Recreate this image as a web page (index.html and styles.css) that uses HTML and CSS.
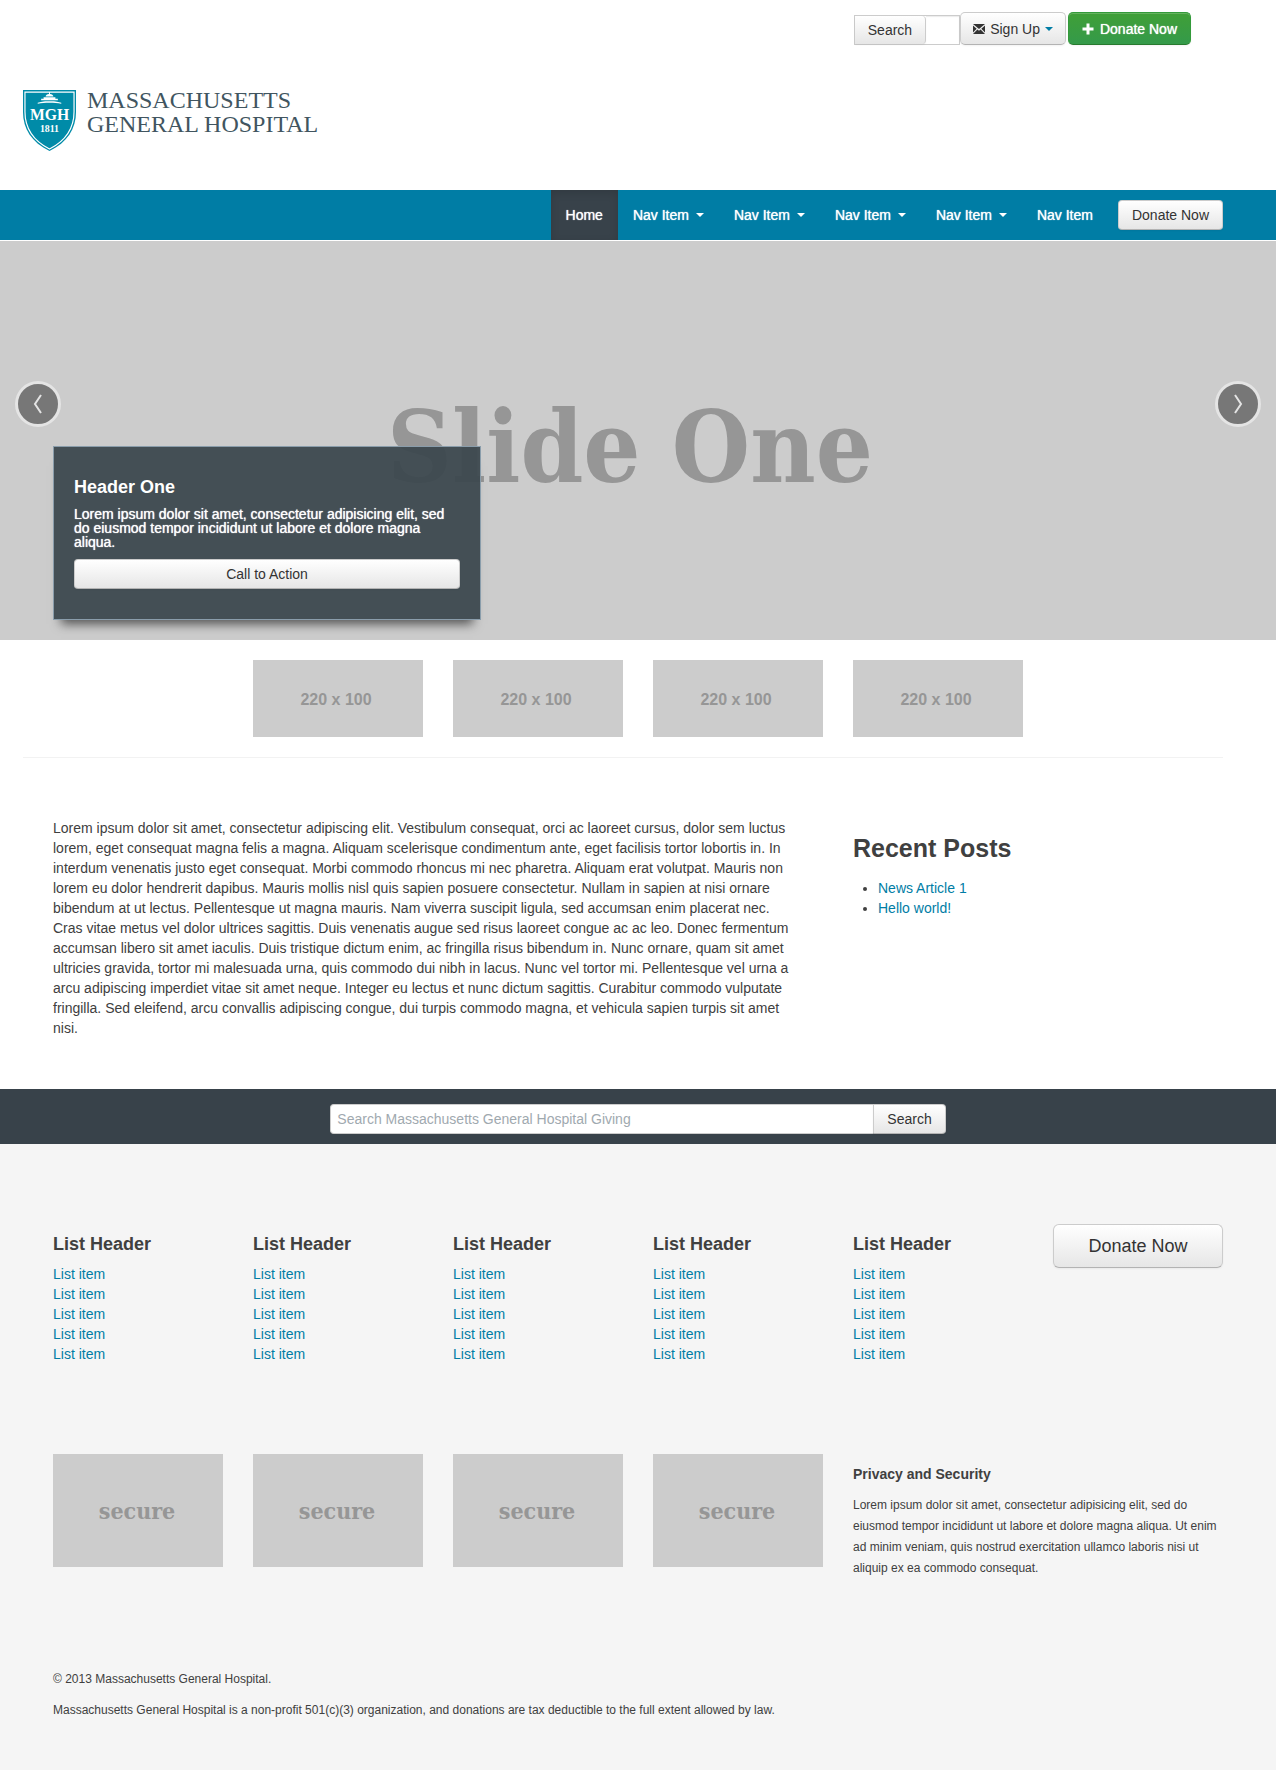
FILE: index.html
```html
<!DOCTYPE html>
<html lang="en">
<head>
<meta charset="utf-8">
<meta name="viewport" content="width=device-width, initial-scale=1">
<title>Massachusetts General Hospital Giving</title>
<link rel="stylesheet" href="styles.css">
</head>
<body>
<header class="container">
  <div class="tools">
    <form class="quick-search">
      <button class="btn" type="button">Search</button>
      <input type="text" aria-label="Search">
    </form>
    <button class="btn btn-tool" type="button">
      <svg width="12" height="10" viewBox="0 0 12 10" aria-hidden="true"><path fill="#333" d="M0 0h12L6 5zM0 1.500 3.700 4.800 0 8.500zM12 1.500 8.300 4.800 12 8.500zM0 10 4.400 5.400 6 6.800 7.600 5.400 12 10z"/></svg>
      Sign Up
      <span class="caret caret-blue"></span>
    </button>
    <button class="btn btn-tool btn-green" type="button">
      <svg width="12" height="12" viewBox="0 0 12 12" aria-hidden="true"><path fill="#fff" d="M4.500 0.500h3v4H11.500v3H7.500v4h-3v-4H0.500v-3h4z"/></svg>
      Donate Now
    </button>
  </div>
  <a class="logo" href="#">
    <svg width="53" height="61" viewBox="0 0 54 62" aria-hidden="true">
      <path fill="#008ba8" d="M0 0h54v22c0 18-9 31-27 40C9 53 0 40 0 22z"/>
      <path fill="none" stroke="#fff" stroke-width="1.200" d="M2 2h50v20c0 17-8.500 29.500-25 38C10.500 51.500 2 39 2 22z"/>
      <path fill="#fff" d="M26.500 2h1v2c2 .2 3.200 1 3.500 2.500h-8c.3-1.500 1.500-2.300 3.500-2.500zM21 7.300h12v1.500h2.500v1.500h-17V8.800H21zM15 13c3-1 5-1.700 12-1.700S36 12 39 13v1c-4-.7-7-1-12-1s-8 .3-12 1z"/>
      <text x="27" y="31" class="shield-name">MGH</text>
      <text x="27" y="43" class="shield-year">1811</text>
    </svg>
    <span>MASSACHUSETTS<br>GENERAL HOSPITAL</span>
  </a>
</header>

<nav class="navbar">
  <div class="container nav-row">
    <a class="active" href="#">Home</a>
    <a href="#">Nav Item <span class="caret"></span></a>
    <a href="#">Nav Item <span class="caret"></span></a>
    <a href="#">Nav Item <span class="caret"></span></a>
    <a href="#">Nav Item <span class="caret"></span></a>
    <a href="#">Nav Item</a>
    <button class="btn" type="button">Donate Now</button>
  </div>
</nav>

<section class="slider">
  <div class="slide-title">Slide One</div>
  <button class="arrow prev" type="button" aria-label="Previous"><svg width="10" height="20" viewBox="0 0 10 20" aria-hidden="true"><path d="M8 1 2 10l6 9"/></svg></button>
  <button class="arrow next" type="button" aria-label="Next"><svg width="10" height="20" viewBox="0 0 10 20" aria-hidden="true"><path d="M2 1l6 9-6 9"/></svg></button>
  <div class="caption">
    <h4>Header One</h4>
    <p>Lorem ipsum dolor sit amet, consectetur adipisicing elit, sed do eiusmod tempor incididunt ut labore et dolore magna aliqua.</p>
    <button class="btn btn-block" type="button">Call to Action</button>
  </div>
</section>

<main class="container">
  <div class="grid thumbs">
    <div class="thumb">220 x 100</div>
    <div class="thumb">220 x 100</div>
    <div class="thumb">220 x 100</div>
    <div class="thumb">220 x 100</div>
  </div>
  <hr class="rule">
  <div class="grid content">
    <p class="article">Lorem ipsum dolor sit amet, consectetur adipiscing elit. Vestibulum consequat, orci ac laoreet cursus, dolor sem luctus lorem, eget consequat magna felis a magna. Aliquam scelerisque condimentum ante, eget facilisis tortor lobortis in. In interdum venenatis justo eget consequat. Morbi commodo rhoncus mi nec pharetra. Aliquam erat volutpat. Mauris non lorem eu dolor hendrerit dapibus. Mauris mollis nisl quis sapien posuere consectetur. Nullam in sapien at nisi ornare bibendum at ut lectus. Pellentesque ut magna mauris. Nam viverra suscipit ligula, sed accumsan enim placerat nec. Cras vitae metus vel dolor ultrices sagittis. Duis venenatis augue sed risus laoreet congue ac ac leo. Donec fermentum accumsan libero sit amet iaculis. Duis tristique dictum enim, ac fringilla risus bibendum in. Nunc ornare, quam sit amet ultricies gravida, tortor mi malesuada urna, quis commodo dui nibh in lacus. Nunc vel tortor mi. Pellentesque vel urna a arcu adipiscing imperdiet vitae sit amet neque. Integer eu lectus et nunc dictum sagittis. Curabitur commodo vulputate fringilla. Sed eleifend, arcu convallis adipiscing congue, dui turpis commodo magna, et vehicula sapien turpis sit amet nisi.</p>
    <aside class="recent">
      <h3>Recent Posts</h3>
      <ul>
        <li><a href="#">News Article 1</a></li>
        <li><a href="#">Hello world!</a></li>
      </ul>
    </aside>
  </div>
</main>

<form class="search-bar">
  <input type="text" placeholder="Search Massachusetts General Hospital Giving" aria-label="Search Massachusetts General Hospital Giving">
  <button class="btn" type="button">Search</button>
</form>

<footer class="footer">
  <div class="container">
    <div class="grid lists">
      <div><h4>List Header</h4><ul><li><a href="#">List item</a></li><li><a href="#">List item</a></li><li><a href="#">List item</a></li><li><a href="#">List item</a></li><li><a href="#">List item</a></li></ul></div>
      <div><h4>List Header</h4><ul><li><a href="#">List item</a></li><li><a href="#">List item</a></li><li><a href="#">List item</a></li><li><a href="#">List item</a></li><li><a href="#">List item</a></li></ul></div>
      <div><h4>List Header</h4><ul><li><a href="#">List item</a></li><li><a href="#">List item</a></li><li><a href="#">List item</a></li><li><a href="#">List item</a></li><li><a href="#">List item</a></li></ul></div>
      <div><h4>List Header</h4><ul><li><a href="#">List item</a></li><li><a href="#">List item</a></li><li><a href="#">List item</a></li><li><a href="#">List item</a></li><li><a href="#">List item</a></li></ul></div>
      <div><h4>List Header</h4><ul><li><a href="#">List item</a></li><li><a href="#">List item</a></li><li><a href="#">List item</a></li><li><a href="#">List item</a></li><li><a href="#">List item</a></li></ul></div>
      <button class="btn btn-large" type="button">Donate Now</button>
    </div>
    <div class="grid secure-row">
      <div class="secure">secure</div>
      <div class="secure">secure</div>
      <div class="secure">secure</div>
      <div class="secure">secure</div>
      <div class="privacy">
        <h5>Privacy and Security</h5>
        <p>Lorem ipsum dolor sit amet, consectetur adipisicing elit, sed do eiusmod tempor incididunt ut labore et dolore magna aliqua. Ut enim ad minim veniam, quis nostrud exercitation ullamco laboris nisi ut aliquip ex ea commodo consequat.</p>
      </div>
    </div>
    <div class="legal">
      <p>© 2013 Massachusetts General Hospital.</p>
      <p>Massachusetts General Hospital is a non-profit 501(c)(3) organization, and donations are tax deductible to the full extent allowed by law.</p>
    </div>
  </div>
</footer>
</body>
</html>
```
FILE: styles.css
```css
* { box-sizing: border-box; }
body {
  margin: 0;
  background: #fff;
  color: #404040;
  font: 14px/20px "Liberation Sans", Arial, sans-serif;
}
h3, h4, h5, p, ul { margin: 0; }
a { color: #007da5; text-decoration: none; }
button, input { font: inherit; color: inherit; margin: 0; }
svg { display: block; flex: none; }

.container { max-width: 1170px; margin: 0 auto; }
.grid { display: grid; grid-template-columns: repeat(6, 1fr); column-gap: 30px; }

.btn {
  height: 30px;
  padding: 0 13px;
  border: 1px solid #ccc;
  border-bottom-color: #b3b3b3;
  border-radius: 4px;
  background: linear-gradient(#fff, #e6e6e6);
  box-shadow: inset 0 1px 0 rgba(255, 255, 255, .2), 0 1px 2px rgba(0, 0, 0, .05);
  color: #333;
  white-space: nowrap;
}

/* Header */
.tools {
  display: flex;
  justify-content: flex-end;
  align-items: flex-end;
  padding: 12px 32px 0 0;
}
.quick-search { display: flex; border: 1px solid #ccc; }
.quick-search .btn { height: 28px; border-width: 0 1px 0 0; border-radius: 0 4px 4px 0; }
.quick-search input {
  width: 33px;
  height: 28px;
  border: 0;
  box-shadow: inset 0 1px 1px rgba(0, 0, 0, .08);
}
.btn-tool {
  display: flex;
  align-items: center;
  gap: 5px;
  height: 33px;
  padding: 0 12px;
  border-radius: 5px;
}
.btn-green {
  margin-left: 2px;
  padding: 0 13px;
  gap: 6px;
  border-color: #339a3a #339a3a #287a2e;
  background: linear-gradient(#409f37, #349a4a);
  color: #fff;
  text-shadow: 0 0 1px #fff;
}
.caret {
  border: 4px solid transparent;
  border-top-color: #fff;
  border-bottom: 0;
}
.caret-blue { border-top-color: #007da5; }
.logo {
  display: inline-flex;
  gap: 11px;
  margin: 43px 0 39px -30px;
  color: #415560;
  font: 24px/24px "Liberation Serif", serif;
}
.logo svg { margin-top: 2px; }
.shield-name, .shield-year { fill: #fff; text-anchor: middle; font-family: "Liberation Serif", serif; font-weight: bold; }
.shield-name { font-size: 16px; }
.shield-year { font-size: 10px; }

/* Navigation */
.navbar { background: #007da5; border-bottom: 1px solid #fff; }
.nav-row { display: flex; justify-content: flex-end; align-items: center; }
.nav-row a {
  display: flex;
  align-items: center;
  gap: 7px;
  padding: 15px;
  color: #fff;
  text-shadow: 0 0 1px #fff;
}
.nav-row .active { background: #38424a; box-shadow: inset 0 3px 8px rgba(0, 0, 0, .125); }
.nav-row .btn { margin-left: 10px; }

/* Slider */
.slider {
  position: relative;
  display: grid;
  place-items: center;
  min-height: 399px;
  background: #ccc;
}
.slide-title {
  padding: 12px 16px 0 0;
  color: #969696;
  font: bold 100px/120px "DejaVu Serif Condensed", "DejaVu Serif", serif;
}
.arrow {
  position: absolute;
  top: 140px;
  display: grid;
  place-items: center;
  width: 46px;
  height: 46px;
  padding: 0;
  border: 3px solid #e4e4e4;
  border-radius: 50%;
  background: #777;
}
.prev { left: 15px; }
.next { right: 15px; }
.arrow path { fill: none; stroke: #e4e4e4; stroke-width: 2; }
.caption {
  position: absolute;
  left: 53px;
  bottom: 20px;
  width: 428px;
  padding: 30px 20px;
  border: 1px solid #8a9dab;
  background: rgba(60, 71, 78, .94);
  box-shadow: 0 12px 10px -8px rgba(0, 0, 0, .6);
  color: #fff;
}
.caption h4 { margin-bottom: 10px; font-size: 18px; line-height: 20px; }
.caption p { margin-bottom: 10px; line-height: 14px; text-shadow: 0 0 1px #fff; }
.btn-block { display: block; width: 100%; }

/* Main content */
.thumbs { padding: 20px 0; }
.thumb, .secure { display: grid; place-items: center; background: #ccc; color: #969696; }
.thumb { aspect-ratio: 170 / 77; padding: 3px 4px 0 0; font: bold 16px/20px "Liberation Sans", sans-serif; }
.thumb:first-child { grid-column-start: 2; }
.rule { margin: 0 0 0 -30px; border: 0; border-top: 1px solid #f2f2f2; }
.content { padding: 60px 0 51px; }
.article { grid-column: span 4; padding-right: 26px; }
.recent { grid-column: span 2; padding-top: 10px; }
.recent h3 { margin-bottom: 10px; font-size: 25px; line-height: 40px; }
.recent ul { padding-left: 25px; }

/* Search bar */
.search-bar { display: flex; justify-content: center; padding: 15px 20px 10px; background: #38424a; }
.search-bar input {
  width: 543px;
  height: 30px;
  padding: 0 6px;
  border: 1px solid #ccc;
  border-right: 0;
  border-radius: 4px 0 0 4px;
  background: #fff;
}
.search-bar input::placeholder { color: #9fa9af; opacity: 1; }
.search-bar .btn { border-radius: 0 4px 4px 0; }

/* Footer */
.footer { padding: 80px 0 39px; background: #f5f5f5; }
.lists { align-items: start; margin-bottom: 90px; }
.lists h4 { margin: 10px 0; font-size: 18px; line-height: 20px; }
.lists ul { padding: 0; list-style: none; }
.btn-large { height: 44px; border-radius: 6px; font-size: 18px; }
.secure-row { align-items: start; margin-bottom: 90px; }
.secure { aspect-ratio: 3 / 2; padding-right: 2px; font: bold 23px/24px "DejaVu Serif Condensed", "DejaVu Serif", serif; }
.privacy { grid-column: span 2; padding-top: 10px; font-size: 12px; line-height: 21px; }
.privacy h5 { margin-bottom: 11px; font-size: 14px; line-height: 20px; }
.legal { font-size: 12px; line-height: 21px; }
.legal p { margin-bottom: 10px; }
```
